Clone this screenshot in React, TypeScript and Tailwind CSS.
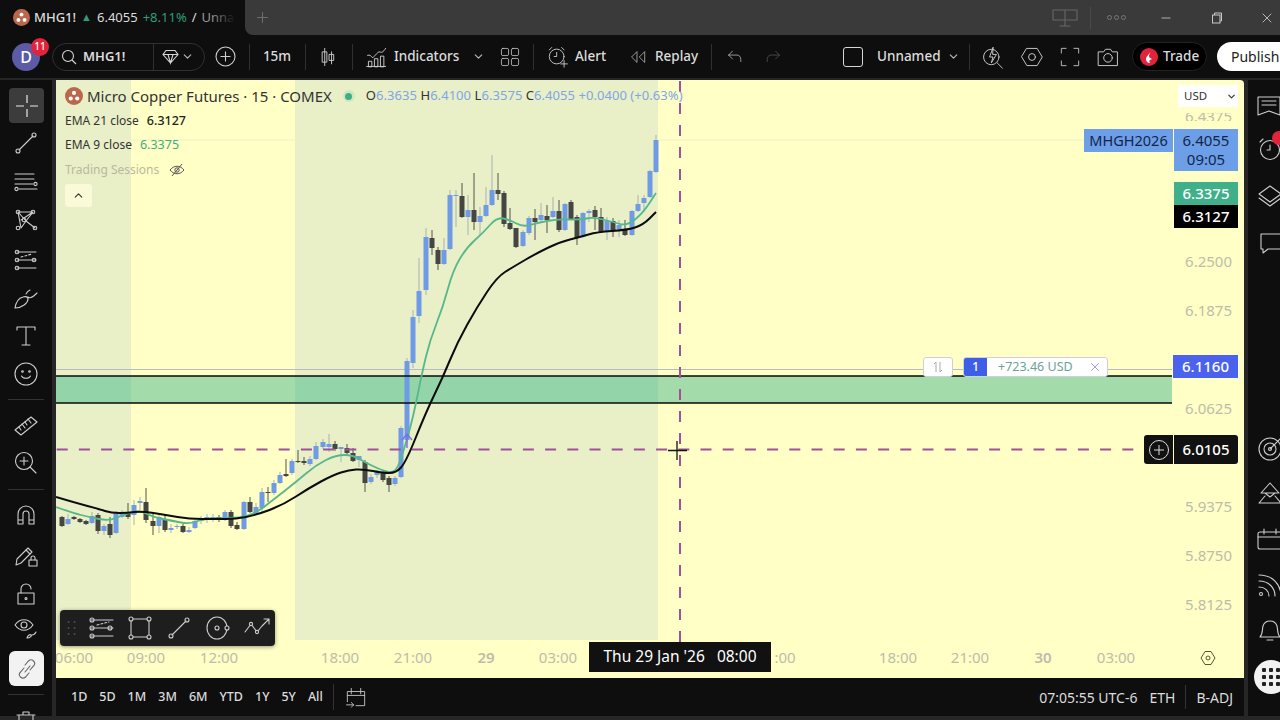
import React from "react";
import { ChevronDown, ChevronUp, Plus, Minus, X } from "lucide-react";

const font = { fontFamily: '"Noto Sans", "Liberation Sans", sans-serif' };

// x, bodyTop, bodyBottom, wickTop, wickBottom, up
type Candle = [number, number, number, number, number, number];
const candles: Candle[] = [
  [62, 517, 526, 516, 527, 0], [68, 519, 524, 514, 525, 1], [74, 517, 519, 516, 520, 0], [80, 519, 522, 518, 523, 0],
  [86, 521, 524, 520, 525, 0], [92, 516, 523, 512, 524, 1], [98, 515, 531, 513, 534, 0], [104, 526, 531, 524, 535, 1],
  [110, 524, 535, 517, 538, 0], [116, 513, 533, 511, 534, 1], [122, 513, 517, 510, 518, 1], [128, 512, 517, 503, 519, 0],
  [134, 505, 515, 500, 525, 1], [140, 501, 503, 497, 510, 1], [146, 502, 520, 488, 523, 0], [153, 521, 526, 513, 535, 0],
  [159, 517, 526, 513, 533, 1], [165, 519, 530, 515, 532, 0], [171, 528, 530, 524, 533, 1], [177, 526, 527, 524, 529, 1],
  [183, 526, 532, 524, 533, 0], [189, 530, 532, 527, 533, 1], [195, 521, 528, 518, 529, 1], [201, 518, 521, 516, 524, 1],
  [207, 517, 519, 514, 523, 1], [213, 517, 519, 514, 522, 1], [219, 517, 519, 515, 522, 0], [225, 512, 520, 510, 521, 1],
  [231, 512, 526, 510, 528, 0], [237, 525, 529, 522, 530, 0], [244, 502, 529, 501, 530, 1], [250, 502, 512, 497, 513, 0],
  [256, 507, 514, 503, 515, 1], [262, 492, 508, 488, 513, 1], [268, 492, 493, 487, 502, 0], [274, 483, 493, 480, 495, 1],
  [280, 475, 483, 472, 484, 1], [286, 474, 476, 459, 477, 0], [292, 461, 473, 459, 475, 1], [298, 461, 462, 450, 463, 0],
  [304, 461, 463, 457, 465, 0], [310, 459, 464, 456, 466, 1], [316, 446, 459, 442, 460, 1], [323, 442, 447, 439, 449, 1],
  [329, 444, 447, 434, 452, 1], [335, 444, 449, 441, 451, 0], [341, 447, 449, 447, 462, 1], [347, 448, 453, 444, 455, 0],
  [353, 453, 461, 448, 462, 0], [359, 456, 460, 456, 467, 1], [365, 462, 483, 460, 492, 0], [371, 477, 482, 474, 484, 1],
  [377, 472, 475, 470, 478, 1], [383, 472, 480, 470, 482, 0], [389, 478, 485, 476, 492, 0], [395, 478, 484, 476, 486, 1],
  [401, 428, 477, 426, 478, 1], [407, 361, 440, 358, 442, 1], [413, 317, 363, 310, 368, 1], [419, 291, 316, 258, 323, 1],
  [426, 237, 290, 228, 295, 1], [432, 238, 248, 230, 255, 0], [438, 250, 264, 247, 270, 0], [444, 250, 264, 238, 265, 1],
  [450, 195, 249, 190, 250, 1], [456, 195, 196, 190, 227, 1], [462, 196, 217, 183, 218, 0], [468, 210, 217, 195, 235, 1],
  [474, 210, 222, 173, 230, 0], [480, 216, 222, 207, 235, 1], [486, 205, 216, 187, 217, 1], [492, 190, 205, 155, 206, 1],
  [498, 190, 194, 173, 200, 0], [504, 193, 224, 191, 227, 0], [510, 223, 229, 208, 230, 0], [516, 228, 247, 228, 248, 0],
  [523, 232, 246, 230, 247, 1], [529, 218, 233, 216, 235, 1], [535, 218, 222, 209, 240, 0], [541, 215, 220, 203, 222, 1],
  [547, 216, 220, 205, 233, 0], [553, 211, 217, 197, 218, 1], [559, 211, 230, 200, 232, 0], [565, 204, 230, 203, 231, 1],
  [571, 202, 219, 200, 220, 0], [577, 217, 238, 215, 245, 0], [583, 213, 237, 212, 238, 1], [589, 211, 213, 209, 222, 1],
  [595, 210, 217, 206, 230, 0], [601, 217, 232, 208, 233, 0], [607, 221, 231, 217, 240, 1], [613, 221, 231, 218, 237, 0],
  [619, 225, 229, 220, 237, 1], [625, 229, 235, 220, 236, 0], [632, 211, 235, 210, 236, 1], [638, 204, 211, 195, 212, 1],
  [644, 198, 203, 195, 212, 1], [650, 171, 197, 170, 198, 1], [656, 140, 172, 135, 173, 1],
];

const ema21 =
  "56,497 76,503 99,509 111,513 128,513 141,511 166,515 189,519 216,519 236,519 256,515 283,505 309,488 333,475 349,470 363,469 383,473 396,473 406,462 426,412 443,377 457,343 477,307 497,277 513,267 537,253 560,242 580,237 597,232 627,230 643,225 656,212";
const ema9 =
  "56,507 73,513 89,517 109,521 123,515 139,510 153,517 173,521 189,524 203,519 223,518 239,518 256,513 273,500 296,482 316,465 336,455 353,455 366,463 386,472 396,472 403,453 413,418 422,373 430,340 443,307 453,270 467,247 483,233 497,217 510,220 523,227 537,223 557,219 580,220 593,217 613,222 627,226 643,213 656,193";

// rounds the corners of a point list
function smooth(points: string) {
  const p = points.split(" ").map((s) => s.split(",").map(Number));
  let d = `M${p[0][0]} ${p[0][1]}`;
  for (let i = 1; i < p.length - 1; i++) {
    const mx = (p[i][0] + p[i + 1][0]) / 2;
    const my = (p[i][1] + p[i + 1][1]) / 2;
    d += `Q${p[i][0]} ${p[i][1]} ${mx} ${my}`;
  }
  const last = p[p.length - 1];
  return `${d}L${last[0]} ${last[1]}`;
}

const priceLabels: [string, number][] = [
  ["6.2500", 261], ["6.1875", 310], ["6.0625", 408], ["5.9375", 506], ["5.8750", 555], ["5.8125", 604],
];
const timeLabels: [string, number, boolean?][] = [
  ["06:00", 74], ["09:00", 146], ["12:00", 219], ["18:00", 340], ["21:00", 413], ["29", 486, true], ["03:00", 558],
  [":00", 785], ["18:00", 898], ["21:00", 970], ["30", 1043, true], ["03:00", 1116],
];

function Ico({ size = 28, children, className = "" }: { size?: number; children: React.ReactNode; className?: string }) {
  return (
    <svg width={size} height={size} viewBox="0 0 28 28" fill="none" stroke="#cdcdcd" strokeWidth="1.1" strokeLinecap="round" strokeLinejoin="round" className={`shrink-0 ${className}`}>
      {children}
    </svg>
  );
}

const Logo = ({ size }: { size: number }) => (
  <svg width={size} height={size} viewBox="0 0 20 20" className="shrink-0">
    <circle cx="10" cy="10" r="10" fill="#b9684c" />
    <circle cx="10" cy="6.6" r="2.3" fill="#fff" />
    <circle cx="6.4" cy="12.8" r="2.3" fill="#fff" />
    <circle cx="13.6" cy="12.8" r="2.3" fill="#fff" />
  </svg>
);

const Divider = ({ w }: { w: string }) => (
  <div className={`${w} flex justify-center shrink-0`}><div className="w-[1px] h-[26px] bg-[#303030]" /></div>
);

const leftTools: { y: number; el: React.ReactNode }[] = [
  { y: 143, el: <><path d="M7 21 21 7" /><circle cx="6" cy="22" r="2" /><circle cx="22" cy="6" r="2" /></> },
  { y: 181, el: <><path d="M3 7h19M3 12h19M3 17h18M7 22h18" /><circle cx="23.5" cy="17" r="1.6" /><circle cx="4.5" cy="22" r="1.6" /></> },
  { y: 220, el: <><path d="m6 6 3 16M6 6l8 9 7-9M9 22l5-7 9 7M6 6l15 0M9 14l12-8" /><circle cx="6" cy="6" r="1.8" /><circle cx="21" cy="6" r="1.8" /><circle cx="6" cy="22" r="1.8" /><circle cx="23" cy="22" r="1.8" /><circle cx="12" cy="14" r="1.8" /></> },
  { y: 260, el: <><path d="M5 6h19M5 14h19M5 22h19" /><circle cx="5" cy="6" r="1.8" /><circle cx="5" cy="14" r="1.8" /><circle cx="5" cy="22" r="1.8" /><circle cx="22" cy="14" r="1.8" /><path d="M9 11l11-3" strokeDasharray="2 2" /></> },
  { y: 298, el: <path d="M3 24c1-6 4-10 8-11 3-1 5 0 5 2 0 4-6 9-13 9ZM16 13c2 2 5 0 9-4M14 10c1-2 2-3 4-4" /> },
  { y: 336, el: <path d="M5 8V5h18v3M14 5v18M10 23h8" /> },
  { y: 374, el: <><circle cx="14" cy="14" r="11" /><path d="M9.5 16c1.5 3 7.5 3 9 0" /><circle cx="10.5" cy="11.5" r=".8" /><circle cx="17.5" cy="11.5" r=".8" /></> },
  { y: 425, el: <><path d="m3 19 16-13 6 5-16 13Z" /><path d="m7 16 2 3M10 13l3 4M13 11l2 3M16 8l3 4" /></> },
  { y: 463, el: <><circle cx="12" cy="12" r="8.5" /><path d="M12 8v8M8 12h8M18 18l6 6" /></> },
  { y: 515, el: <path d="M6 23V13a8 8 0 0 1 16 0v10h-5V13a3 3 0 0 0-6 0v10ZM6 19h5M17 19h5" /> },
  { y: 555, el: <><path d="m4 24 1-6L16 7l4 4L9 22Z" /><path d="m14 9 4 4" /><rect x="17" y="19" width="8" height="6" /><path d="M19 19v-2a2 2 0 0 1 4 0v2" /></> },
  { y: 594, el: <><rect x="6" y="13" width="16" height="11" /><path d="M9 13V9a5 5 0 0 1 10 0" /><circle cx="14" cy="18.5" r="1" /></> },
  { y: 628, el: <><path d="M3 11c5-7 13-7 18 0-5 7-13 7-18 0Z" /><circle cx="12" cy="11" r="3" /><path d="M15 24c1-3 3-4 4-3s-1 3-4 3ZM20 21c1 0 3-1 4-3" /></> },
];

const RightIcons: { y: number; el: React.ReactNode }[] = [
  { y: 105, el: <><path d="M2 6h22v18l-11-4-11 4Z" /><path d="M6 10h14M6 14h14" /></> },
  { y: 149, el: <><circle cx="14" cy="15" r="9.5" /><path d="M14 10v5h-3M4 7l3-3" /></> },
  { y: 196, el: <path d="m14 4 11 8-11 8-11-8ZM3 16l11 8 11-8" /> },
  { y: 243, el: <path d="M5 5h20v15H12l-5 4v-4H5Z" /> },
  { y: 449, el: <><circle cx="14" cy="14" r="11" /><circle cx="14" cy="14" r="6" /><circle cx="14" cy="14" r="1.5" /><path d="m14 14 11-11" /></> },
  { y: 493, el: <path d="m14 4 9 10H5ZM9 14l5 4 5-4M3 24l6-7M25 24l-6-7M3 24h22" /> },
  { y: 539, el: <><rect x="2" y="7" width="24" height="17" rx="2" /><path d="M2 12h24M8 4v5M20 4v5" /></> },
  { y: 585, el: <><circle cx="5" cy="23" r="1.5" /><path d="M3 16c6 0 10 4 10 9M3 10c10 0 16 7 16 15M3 4c14 0 22 10 22 21" /></> },
  { y: 630, el: <path d="M4 21c3-3 2-7 3-11 1-3 4-5 7-5s6 2 7 5c1 4 0 8 3 11ZM11 24h6" /> },
];

function App() {
  return (
    <div style={font} className="w-[1280px] h-[720px] overflow-hidden bg-[#262626] flex flex-col text-[#dcdcdc] select-none">
      {/* title bar */}
      <div className="h-[35px] flex bg-[#0e0e0e] shrink-0">
        <div className="w-[245px] h-full relative flex items-center gap-[5px] pl-[13px] text-[13px] whitespace-nowrap">
          <Logo size={17} />
          <span className="font-medium -ml-[1px]">MHG1!</span>
          <span className="text-[#2e9e78] text-[11px]">▲</span>
          <span>6.4055</span>
          <span className="text-[#2e9e78]">+8.11%</span>
          <span>/</span>
          <span className="text-[#9a9a9a]">Unna</span>
          <div className="absolute right-[10px] top-0 h-full w-[24px] bg-gradient-to-r from-transparent to-[#0e0e0e]" />
        </div>
        <div className="flex-1 bg-[#3a3a3a] rounded-bl-lg flex items-center">
          <Plus size={17} strokeWidth={1.2} className="ml-[9px] text-[#777]" />
          <div className="ml-auto flex items-center">
            <Ico size={28} className="mr-[11px]"><path d="M2 6h24v10H2ZM14 6v16M9 22h10" stroke="#666" /></Ico>
            <div className="w-[1px] h-[22px] bg-[#4a4a4a] mr-[16px]" />
            <div className="flex gap-[2px] mr-[33px]">
              <span className="w-[5px] h-[5px] rounded-full border border-[#777]" />
              <span className="w-[5px] h-[5px] rounded-full border border-[#777]" />
              <span className="w-[5px] h-[5px] rounded-full border border-[#777]" />
            </div>
            <Minus size={14} strokeWidth={1.4} className="text-[#c8c8c8] mr-[38px]" />
            <svg width="12" height="12" viewBox="0 0 12 12" fill="none" stroke="#c8c8c8" className="mr-[36px]"><rect x="1.5" y="3" width="7.5" height="8" /><path d="M3.5 3V1h7v8H9" /></svg>
            <X size={16} strokeWidth={1.2} className="text-[#d8d8d8] mr-[5px]" />
          </div>
        </div>
      </div>

      {/* top toolbar */}
      <div className="h-[43px] shrink-0 bg-[#0e0e0e] flex items-center text-[13.5px] font-medium whitespace-nowrap">
        <div className="relative ml-[12px] w-[28px] h-[28px] rounded-full bg-[#5b5ba6] flex items-center justify-center text-white text-[16px] shrink-0">
          D
          <span className="absolute -right-[9px] -top-[5px] w-[18px] h-[18px] rounded-full bg-[#e0243c] text-[10px] flex items-center justify-center">11</span>
        </div>
        <div className="ml-[12px] w-[153px] h-[28px] rounded-full border border-[#303030] flex items-center shrink-0">
          <div className="w-[101px] h-full border-r border-[#303030] flex items-center pl-[8px] gap-[7px]">
            <svg width="16" height="16" viewBox="0 0 16 16" fill="none" stroke="#d6d6d6" strokeWidth="1.1"><circle cx="7" cy="7" r="5.5" /><path d="m11 11 4 4" /></svg>
            <span className="font-semibold text-[13px] -ml-[1px]">MHG1!</span>
          </div>
          <svg width="17" height="17" viewBox="0 0 17 17" fill="none" stroke="#d6d6d6" strokeWidth="1.1" className="ml-[8px]"><path d="M4 2.5h9l3 4-7.5 8.5L1 6.5ZM1 6.500h15M6 6.500l2.500 8.500L11 6.500" /></svg>
          <ChevronDown size={13} className="ml-[2px] text-[#bbb]" />
        </div>
        <div className="w-[40px] flex justify-center shrink-0">
          <svg width="21" height="21" viewBox="0 0 21 21" fill="none" stroke="#cdcdcd" strokeWidth="1.1"><circle cx="10.5" cy="10.5" r="9.5" /><path d="M10.5 5.500v10M5.500 10.500h10" /></svg>
        </div>
        <Divider w="w-[8px]" />
        <div className="w-[48px] text-center shrink-0">15m</div>
        <Divider w="w-[8px]" />
        <div className="w-[40px] flex justify-center shrink-0">
          <Ico size={24}><path d="M9 4v20M17 8v14" /><rect x="6.5" y="8" width="5" height="12" /><rect x="14.5" y="11" width="5" height="7" /></Ico>
        </div>
        <Divider w="w-[6px]" />
        <div className="ml-[10px] w-[25px] shrink-0">
          <Ico size={24}><path d="M3 12c3-1 4 1 6 3 3-3 6-7 8-7 2 1 4 1 7-4M4 25v-6h4v6ZM11 25v-9h4v9ZM18 25v-12h4v12Z M2 25h22" /></Ico>
        </div>
        <span className="ml-[4px] w-[63px] shrink-0">Indicators</span>
        <ChevronDown size={13} className="ml-[15px] text-[#bbb] shrink-0" />
        <div className="w-[7px] shrink-0" />
        <div className="w-[36px] flex justify-center shrink-0">
          <Ico size={20}><rect x="2" y="2" width="10" height="10" rx="2" /><rect x="16" y="2" width="10" height="10" rx="2" /><rect x="2" y="16" width="10" height="10" rx="2" /><rect x="16" y="16" width="10" height="10" rx="2" /></Ico>
        </div>
        <Divider w="w-[10px]" />
        <div className="ml-[8px] w-[23px] shrink-0">
          <Ico size={23}><circle cx="13" cy="14" r="9" /><path d="M13 9v5h-3M4 6l3-3M22 6l-3-3M22 19v8M18 23h8" /></Ico>
        </div>
        <span className="ml-[6px] w-[33px] shrink-0">Alert</span>
        <div className="ml-[21px] w-[20px] shrink-0">
          <Ico size={18}><path d="M12 6 4 14l8 8ZM24 6l-8 8 8 8Z" /></Ico>
        </div>
        <span className="ml-[6px] w-[44px] shrink-0">Replay</span>
        <Divider w="w-[24px]" />
        <div className="ml-[3px] w-[20px] shrink-0">
          <Ico size={18}><path d="M10 5 4 11l6 6M4 11h13c4 0 6 3 6 7v3" /></Ico>
        </div>
        <div className="ml-[18px] w-[20px] shrink-0">
          <Ico size={18}><path d="m18 5 6 6-6 6M24 11H11c-4 0-6 3-6 7v3" stroke="#5f5f5f" /></Ico>
        </div>
        <div className="ml-[59px] w-[20px] h-[20px] rounded-[3px] border border-[#d6d6d6] shrink-0" />
        <span className="ml-[14px] w-[59px] shrink-0">Unnamed</span>
        <ChevronDown size={13} className="ml-[11px] text-[#bbb] shrink-0" />
        <Divider w="w-[18px]" />
        <div className="w-[24px] ml-[3px] shrink-0">
          <Ico size={24}><circle cx="12" cy="14" r="9" /><path d="m14 3-4 11h4l-2 7 6-10h-4ZM19 21l6 6" /></Ico>
        </div>
        <div className="w-[24px] ml-[15px] shrink-0">
          <Ico size={24}><path d="m8 4h12l6 10-6 10H8L2 14Z" /><circle cx="14" cy="14" r="4" /></Ico>
        </div>
        <div className="w-[24px] ml-[15px] shrink-0">
          <Ico size={22}><path d="M3 9V3h6M19 3h6v6M25 19v6h-6M9 25H3v-6" /></Ico>
        </div>
        <div className="w-[24px] ml-[13px] shrink-0">
          <Ico size={24}><path d="M3 8h6l2-3h6l2 3h6v16H3Z" /><circle cx="14" cy="15" r="5" /></Ico>
        </div>
        <div className="ml-[12px] w-[75px] h-[29px] rounded-full border border-[#222] bg-black flex items-center pl-[7px] gap-[5px] shrink-0">
          <span className="w-[18px] h-[18px] rounded-full bg-[#e0243c] flex items-center justify-center">
            <svg width="10" height="12" viewBox="0 0 10 12"><path d="M7 0C6 3 2 5 2 8c0 2 1 4 4 4-1-2-1-3 2-4-1-1-3-1-3-3 0-1 1-3 2-5Z" fill="#fff" /></svg>
          </span>
          <span>Trade</span>
        </div>
        <div className="ml-[10px] w-[70px] h-[29px] rounded-l-full bg-white text-[#222] font-normal text-[14px] flex items-center pl-[14px] shrink-0">Publish</div>
      </div>

      <div className="h-[2px] shrink-0" />

      <div className="flex-1 flex min-h-0">
        {/* left tools */}
        <div className="w-[52px] h-[636px] bg-[#0e0e0e] relative shrink-0">
          <div className="absolute left-[9px] top-[8px] w-[35px] h-[35px] rounded-[4px] bg-[#3c3c3c] flex items-center justify-center">
            <svg width="28" height="28" viewBox="0 0 28 28" stroke="#e8e8e8" strokeWidth="1.2"><path d="M14 3v8M14 17v8M3 14h8M17 14h8" /></svg>
          </div>
          {leftTools.map((t) => (
            <div key={t.y} className="absolute left-[12px]" style={{ top: t.y - 80 - 14 }}>
              <Ico>{t.el}</Ico>
            </div>
          ))}
          <div className="absolute left-[8px] top-[319px] w-[36px] h-[1px] bg-[#333]" />
          <div className="absolute left-[8px] top-[409px] w-[36px] h-[1px] bg-[#333]" />
          <div className="absolute left-[9px] top-[571px] w-[35px] h-[35px] rounded-[6px] bg-[#f2f2f2] flex items-center justify-center">
            <svg width="24" height="24" viewBox="0 0 24 24" fill="none" stroke="#666" strokeWidth="1.1" strokeLinecap="round"><path d="M10 15 15 9M9 11l-3.500 4a3.500 3.500 0 0 0 5 5l3.500-4M15 13l3.500-4a3.500 3.500 0 0 0-5-5L10 8" /></svg>
          </div>
          <div className="absolute left-[8px] top-[614px] w-[36px] h-[1px] bg-[#333]" />
          <div className="absolute left-[12px] top-[628px]"><Ico><path d="M5 7h18M11 7V4h6v3M7 7v18h14V7" /></Ico></div>
        </div>

        <div className="w-[4px] shrink-0" />

        {/* chart + bottom bar */}
        <div className="w-[1188px] shrink-0 flex flex-col">
          <div className="relative h-[598px] bg-[#ffffc6] rounded-tr-sm overflow-hidden text-[#333]">
            <svg className="absolute inset-0" width="1188" height="598" viewBox="56 80 1188 598" fill="none">
              <rect x="56" y="80" width="75" height="560" fill="#e9efc6" />
              <rect x="295" y="80" width="363" height="560" fill="#e9efc6" />
              <path d="M56 140H1084" stroke="#eeeecb" />
              <path d="M56 369.500H1172" stroke="#b9b9c8" />
              <rect x="56" y="376" width="1116" height="27" fill="#a3dcaa" />
              <rect x="295" y="376" width="363" height="27" fill="#93d5a8" />
              <rect x="56" y="376" width="75" height="27" fill="#93d5a8" />
              {candles.map(([x, t, b, wt, wb, up]) => (
                <g key={x}>
                  <path d={`M${x} ${wt}V${wb}`} stroke={up ? "#a8b3b6" : "#55554c"} />
                  <rect x={x - 2.5} y={t} width="5" height={b - t} fill={up ? "#6f9ae6" : "#454542"} />
                </g>
              ))}
              <path d="M56 376H1172M56 403H1172" stroke="#0a0a0a" strokeWidth="1.6" />
              <path d={smooth(ema9)} stroke="#55b88c" strokeWidth="1.8" strokeLinejoin="round" />
              <path d={smooth(ema21)} stroke="#0c0c0c" strokeWidth="2" strokeLinejoin="round" />
              <path d="M680 81V642" stroke="#a0509c" strokeWidth="2" strokeDasharray="11 11" />
              <path d="M56.700 449.500H1135" stroke="#a0509c" strokeWidth="2" strokeDasharray="11 11.200" />
              <path d="M407 448v-14M402 440l5-6 5 6" stroke="#7d6fe0" strokeWidth="1.4" />
              <path d="M677 441v19M668 450.500h19" stroke="#111" strokeWidth="1.3" />
            </svg>

            {/* legend */}
            <div className="absolute left-[9px] top-[7px] flex flex-col items-start whitespace-nowrap">
              <div className="h-[18px] flex items-center">
                <Logo size={18} />
                <span className="ml-[4px] text-[15px]">Micro Copper Futures · 15 · COMEX</span>
                <span className="ml-[11px] w-[12px] h-[12px] rounded-full bg-[#cfe8c4] flex items-center justify-center">
                  <span className="w-[7px] h-[7px] rounded-full bg-[#3fae85]" />
                </span>
                <span className="ml-[11px] text-[13px] tracking-[0.05px] text-[#7ea6e6]">
                  <span className="text-[#333]">O</span>6.3635 <span className="text-[#333]">H</span>6.4100 <span className="text-[#333]">L</span>6.3575 <span className="text-[#333]">C</span>6.4055 +0.0400 (+0.63%)
                </span>
              </div>
              <div className="mt-[8px] h-[16px] flex items-center text-[12px]">
                EMA 21 close<span className="ml-[8px] text-[12.500px] font-medium text-[#222]">6.3127</span>
              </div>
              <div className="mt-[8px] h-[16px] flex items-center text-[12px]">
                EMA 9 close<span className="ml-[8px] text-[12.500px] text-[#3fae85]">6.3375</span>
              </div>
              <div className="mt-[9px] h-[16px] flex items-center text-[12px] text-[#b9b9a0]">
                Trading Sessions
                <svg width="16" height="16" viewBox="0 0 16 16" fill="none" stroke="#555" className="ml-[10px]"><path d="M1 8c4-5 10-5 14 0-4 5-10 5-14 0Z" /><circle cx="8" cy="8" r="2.2" /><path d="m3 14 10-12" /></svg>
              </div>
              <div className="mt-[6px] w-[27px] h-[23px] rounded-[3px] bg-[#fafad8] flex items-center justify-center">
                <ChevronUp size={13} className="text-[#333]" />
              </div>
            </div>

            {/* currency */}
            <div className="absolute left-[1122px] top-[5px] w-[60px] h-[22px] bg-white flex items-center pl-[6px] text-[11.500px] text-[#333]">
              USD
              <ChevronDown size={11} strokeWidth={2.5} className="ml-auto mr-[1px]" />
            </div>

            {/* price axis */}
            <div className="absolute left-[1126px] top-[33px] w-[50px] h-[8px] overflow-hidden text-[15px] leading-[14px] text-[#bdbdaa] text-right">
              <div className="-mt-[4px]">6.4375</div>
            </div>
            {priceLabels.map(([p, y]) => (
              <div key={p} className="absolute left-[1120px] w-[56px] text-right text-[15px] leading-[18px] text-[#bdbdaa]" style={{ top: y - 80 - 9 }}>
                {p}
              </div>
            ))}

            {/* last price tags */}
            <div className="absolute left-[1028px] top-[49px] w-[89px] h-[23px] bg-[#6d9fe8] text-[#12264a] text-[14.500px] flex items-center justify-center">MHGH2026</div>
            <div className="absolute left-[1118px] top-[49px] w-[64px] h-[42px] bg-[#6d9fe8] text-[#12264a] text-[15px] leading-[19px] flex flex-col items-center justify-center">
              <span>6.4055</span>
              <span>09:05</span>
            </div>
            <div className="absolute left-[1118px] top-[102px] w-[64px] h-[23px] bg-[#3fb08a] text-white font-medium text-[15px] flex items-center justify-center">6.3375</div>
            <div className="absolute left-[1118px] top-[125px] w-[64px] h-[23px] bg-black text-white font-medium text-[15px] flex items-center justify-center">6.3127</div>

            {/* position */}
            <div className="absolute left-[867px] top-[277px] w-[30px] h-[20px] bg-white rounded-[3px] border border-[#cfcfd8] flex items-center justify-center">
              <svg width="14" height="14" viewBox="0 0 14 14" fill="none" stroke="#aaa"><path d="M5 12V2L3 4M9 2v10l2-2" /></svg>
            </div>
            <div className="absolute left-[907px] top-[277px] w-[145px] h-[20px] bg-white rounded-[3px] border border-[#cfcfe0] flex items-center overflow-hidden text-[12.500px]">
              <span className="w-[23px] h-full bg-[#3f5ee8] text-white flex items-center justify-center font-medium">1</span>
              <span className="ml-[11px] text-[#6ba39a]">+723.46 USD</span>
              <X size={14} strokeWidth={1.3} className="ml-auto mr-[5px] text-[#8b7fd6]" />
            </div>
            <div className="absolute left-[1117px] top-[275px] w-[65px] h-[23px] bg-[#4a62ee] text-white font-medium text-[15px] flex items-center justify-center">6.1160</div>

            {/* crosshair price */}
            <div className="absolute left-[1088px] top-[355px] w-[29px] h-[29px] bg-[#111] rounded-l-[3px] flex items-center justify-center">
              <svg width="20" height="20" viewBox="0 0 20 20" fill="none" stroke="#ddd"><circle cx="10" cy="10" r="9.5" /><path d="M10 5v10M5 10h10" /></svg>
            </div>
            <div className="absolute left-[1118px] top-[355px] w-[64px] h-[29px] bg-[#111] rounded-r-[3px] text-white font-medium text-[15px] flex items-center justify-center">6.0105</div>

            {/* drawing toolbar */}
            <div className="absolute left-[4px] top-[530px] w-[215px] h-[36px] rounded-[4px] bg-[#1e1e1e] shadow-[0_1px_4px_rgba(0,0,0,0.4)] flex items-center pl-[7px]">
              <svg width="9" height="18" viewBox="0 0 9 18" fill="#4c4c4c"><circle cx="1.5" cy="3" r="1" /><circle cx="7.5" cy="3" r="1" /><circle cx="1.5" cy="9" r="1" /><circle cx="7.5" cy="9" r="1" /><circle cx="1.5" cy="15" r="1" /><circle cx="7.5" cy="15" r="1" /></svg>
              <Ico className="ml-[11px]"><path d="M4 6h22M4 14h22M4 22h22" /><circle cx="5" cy="6" r="2" /><circle cx="5" cy="14" r="2" /><circle cx="23" cy="14" r="2" /><circle cx="5" cy="22" r="2" /><path d="M10 11l12-3" strokeDasharray="2 2" /></Ico>
              <Ico className="ml-[11px]"><rect x="5" y="5" width="18" height="18" /><circle cx="5" cy="5" r="2" fill="#1e1e1e" /><circle cx="23" cy="5" r="2" fill="#1e1e1e" /><circle cx="5" cy="23" r="2" fill="#1e1e1e" /><circle cx="23" cy="23" r="2" fill="#1e1e1e" /></Ico>
              <Ico className="ml-[11px]"><path d="M7 21 21 7" /><circle cx="6" cy="22" r="2" /><circle cx="22" cy="6" r="2" /></Ico>
              <Ico className="ml-[11px]"><ellipse cx="13" cy="14" rx="10" ry="11" /><circle cx="13" cy="14" r="2" /><circle cx="23" cy="14" r="2" fill="#1e1e1e" /></Ico>
              <Ico className="ml-[11px]"><path d="m2 18 6-8 6 8 5-6 7-7M21 5h5v5" /><circle cx="8" cy="10" r="1.6" fill="#1e1e1e" /><circle cx="14" cy="18" r="1.6" fill="#1e1e1e" /></Ico>
            </div>

            {/* time axis */}
            {timeLabels.map(([t, x, bold]) => (
              <div key={`${t}${x}`} className={`absolute w-[60px] text-center text-[15px] leading-[18px] top-[568px] text-[#bdbdaa] ${bold ? "font-semibold" : ""}`} style={{ left: x - 56 - 30 }}>
                {t}
              </div>
            ))}
            <div className="absolute left-[533px] top-[562px] w-[182px] h-[30px] bg-[#111] text-white text-[15.500px] flex items-center justify-center whitespace-pre">Thu 29 Jan &apos;26   08:00</div>
            <svg className="absolute left-[1144px] top-[570px]" width="16" height="16" viewBox="0 0 16 16" fill="none" stroke="#55552f"><path d="m5 1.500h6l4 6.500-4 6.500H5L1 8Z" /><circle cx="8" cy="8" r="2" /></svg>
          </div>

          {/* bottom bar */}
          <div className="h-[38px] shrink-0 bg-[#0e0e0e] flex items-center text-[12.500px] font-medium whitespace-nowrap">
            <div className="flex items-center gap-[12px] ml-[15px]">
              <span>1D</span><span>5D</span><span>1M</span><span>3M</span><span>6M</span><span>YTD</span><span>1Y</span><span>5Y</span><span>All</span>
            </div>
            <div className="w-[1px] h-[26px] bg-[#333] ml-[10px]" />
            <Ico size={22} className="ml-[11px]"><path d="M3 20V7h22v18H14M8 3v7M20 3v7M3 12h22M2 24h9M8 21l3 3-3 3" /></Ico>
            <div className="ml-auto flex items-center text-[14px] font-normal">
              <span>07:05:55 UTC-6</span>
              <span className="ml-[12px]">ETH</span>
              <div className="w-[1px] h-[24px] bg-[#333] mx-[10px]" />
              <span className="mr-[11px]">B-ADJ</span>
            </div>
          </div>
        </div>

        <div className="w-[4px] shrink-0" />

        {/* right sidebar */}
        <div className="w-[32px] h-[636px] bg-[#0e0e0e] relative shrink-0 overflow-hidden">
          {RightIcons.map((t) => (
            <div key={t.y} className="absolute left-[8px]" style={{ top: t.y - 80 - 14 }}>
              <Ico>{t.el}</Ico>
            </div>
          ))}
          <span className="absolute left-[24px] top-[51px] w-[14px] h-[14px] rounded-full bg-[#e0243c]" />
          <div className="absolute left-[6px] top-[580px] w-[34px] h-[34px] rounded-full bg-[#f2f2f2] grid grid-cols-3 gap-[3px] p-[8px]">
            {Array.from({ length: 9 }).map((_, i) => (
              <span key={i} className="w-[4px] h-[4px] rounded-[1px] bg-[#222]" />
            ))}
          </div>
        </div>
      </div>
    </div>
  );
}

export default App;
